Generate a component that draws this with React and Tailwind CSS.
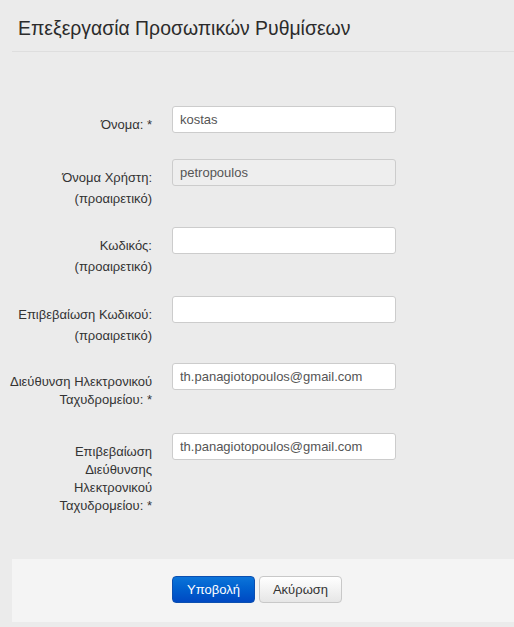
const rows = [
  { label: ['Όνομα: *'], value: 'kostas', h: 'h-[53px]' },
  { label: ['Όνομα Χρήστη:'], optional: true, value: 'petropoulos', disabled: true, h: 'h-[68px]' },
  { label: ['Κωδικός:'], optional: true, value: '', h: 'h-[69px]' },
  { label: ['Επιβεβαίωση Κωδικού:'], optional: true, value: '', h: 'h-[67px]' },
  { label: ['Διεύθυνση Ηλεκτρονικού', 'Ταχυδρομείου: *'], value: 'th.panagiotopoulos@gmail.com', h: 'h-[70px]' },
  {
    label: ['Επιβεβαίωση', 'Διεύθυνσης', 'Ηλεκτρονικού', 'Ταχυδρομείου: *'],
    value: 'th.panagiotopoulos@gmail.com',
    h: 'h-[126px]',
  },
];

const App = () => {
  return (
    <div className="min-h-screen w-full bg-[#ebebeb] font-['Liberation_Sans',Arial,sans-serif] text-[#333]">
      {/* Header */}
      <div className="ml-[12px] border-b border-[#dedede] pt-[17px] pb-[11px]">
        <h1 className="pl-[6px] text-[19.4px] leading-[23px] text-[#2b2b2b]">Επεξεργασία Προσωπικών Ρυθμίσεων</h1>
      </div>

      {/* Form */}
      <div className="mt-[54px] pl-[10px]">
        {rows.map((row, i) => (
          <div key={i} className={`flex items-start gap-[20px] ${row.h}`}>
            <div className="w-[142px] whitespace-nowrap pt-[10px] text-right text-[13px] leading-[18px] text-[#333]">
              {row.label.map((l) => (
                <div key={l}>{l}</div>
              ))}
              {row.optional && <div className="mt-[3px]">(προαιρετικό)</div>}
            </div>
            <input
              type="text"
              defaultValue={row.value}
              disabled={row.disabled}
              className={`h-[27px] w-[224px] rounded-[3px] border border-[#cccccc] px-[7px] text-[13px] text-[#555] outline-none ${
                row.disabled ? 'bg-[#eeeeee]' : 'bg-white'
              }`}
            />
          </div>
        ))}
      </div>

      {/* Footer */}
      <div className="ml-[12px] flex h-[63px] items-start gap-[4px] bg-[#f4f4f4] pl-[160px] pt-[17px]">
        <button className="h-[27px] w-[83px] rounded-[4px] border border-[#0b4fb0] bg-gradient-to-b from-[#0c74d9] to-[#0048c2] text-[13px] text-white">
          Υποβολή
        </button>
        <button className="h-[27px] w-[83px] rounded-[4px] border border-[#c8c8c8] bg-gradient-to-b from-white to-[#e6e6e6] text-[13px] text-[#333]">
          Ακύρωση
        </button>
      </div>
    </div>
  );
};

export default App;
